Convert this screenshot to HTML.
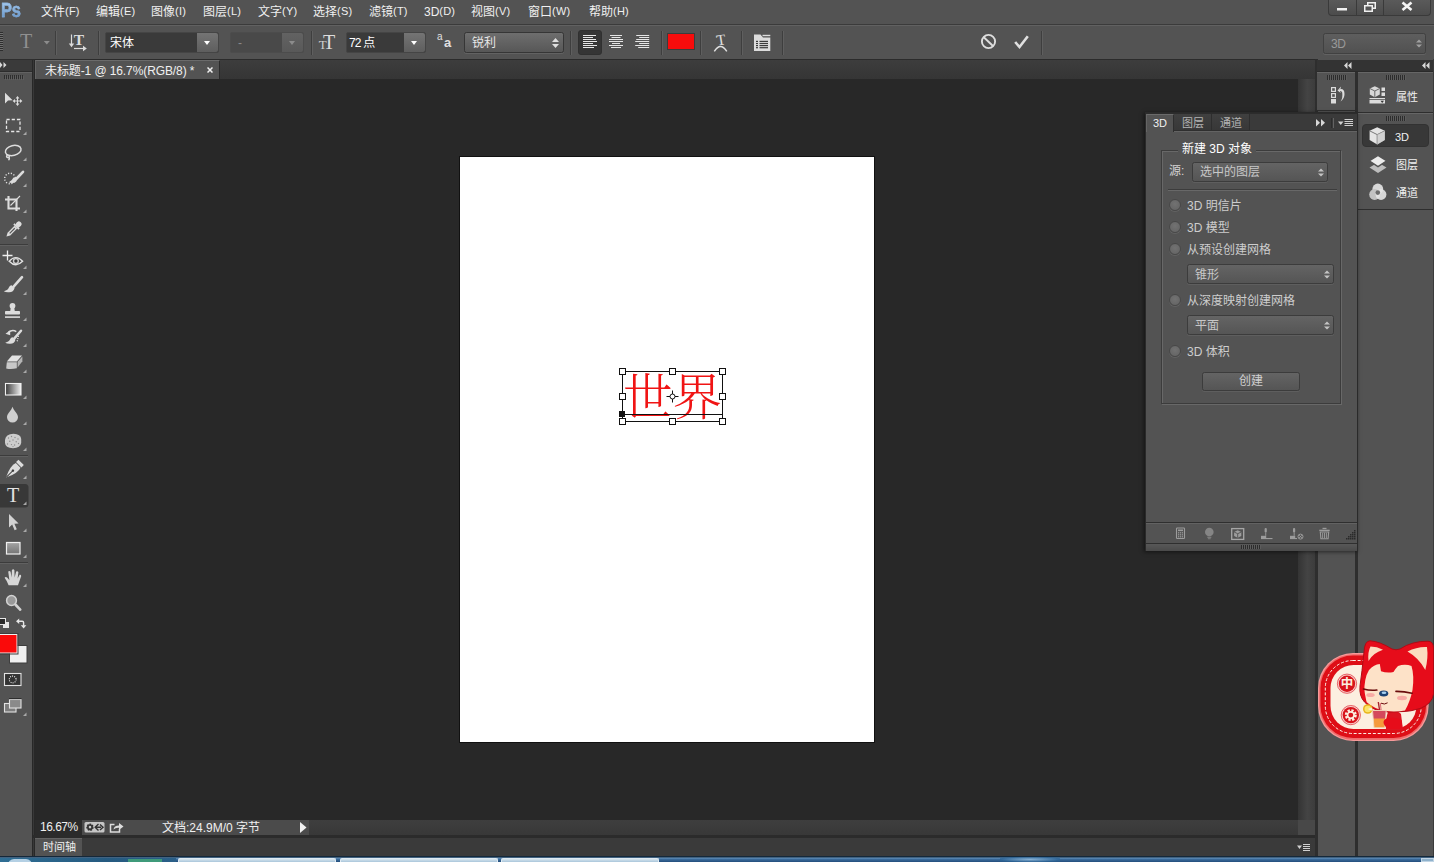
<!DOCTYPE html>
<html lang="zh-CN">
<head>
<meta charset="utf-8">
<title>Photoshop</title>
<style>
*{box-sizing:border-box;margin:0;padding:0}
html,body{width:1434px;height:862px;overflow:hidden;background:#535353}
body{position:relative;font-family:"Liberation Sans","Noto Sans CJK SC",sans-serif;font-size:12px;color:#e6e6e6}
.abs{position:absolute}
#menubar{left:0;top:0;width:1434px;height:25px;background:#535353;border-bottom:1px solid #3b3b3b}
#menubar .mi{position:absolute;top:3px;height:18px;line-height:18px;white-space:nowrap;color:#f0f0f0}
#optbar{left:0;top:25px;width:1434px;height:34px;background:#535353;border-top:1px solid #616161}
#tabbar{left:35px;top:59px;width:1280px;height:20px;background:linear-gradient(#3d3d3d,#353535);border-top:1px solid #2b2b2b}
#canvas{left:32px;top:79px;width:1283px;height:741px;background:#282828}
#doc{left:459px;top:156px;width:416px;height:587px;background:#fff;border:1px solid #111}
#tools{left:0;top:60px;width:32px;height:796px;background:#535353;box-shadow:1px 0 0 #282828,2px 0 0 #383838,3px 0 0 #282828}
#statusbar{left:35px;top:820px;width:1280px;height:15px;background:linear-gradient(#3e3e3e,#383838)}
#timeline{left:35px;top:838px;width:1280px;height:18px;background:#3a3a3a}
#taskbar{left:0;top:856px;width:1434px;height:6px;background:#2a5a8c}
#dock{left:1315px;top:59px;width:119px;height:798px;background:#535353}
#p3d{left:1146px;top:113px;width:211px;height:437px;background:#535353}

.vsep{position:absolute;top:5px;width:2px;height:24px;border-left:1px solid #3e3e3e;border-right:1px solid #5f5f5f}
.combo{position:absolute;top:6px;height:21px;background:#3a3a3a;border:1px solid #454545;border-radius:2px}
.combo.dis{background:#494949;border-color:#4c4c4c}
.combo .ct{position:absolute;top:1px;line-height:18px;color:#fff;white-space:nowrap}
.combo .cb{position:absolute;right:0;top:0;width:21px;height:19px;background:linear-gradient(#747474,#5e5e5e);border-radius:0 2px 2px 0}
.combo.dis .cb{background:linear-gradient(#626262,#595959)}
.combo .cb:after{content:"";position:absolute;left:7px;top:8px;border:3.500px solid transparent;border-top:4px solid #fff;border-bottom:none}
.combo.dis .cb:after{border-top-color:#8c8c8c}
.btn{position:absolute;border:1px solid #363636;border-radius:2.500px;background:linear-gradient(#6e6e6e,#575757);box-shadow:0 1px 0 #626262;color:#e8e8e8;white-space:nowrap}

#taskbar{background:linear-gradient(#14283a 0,#14283a 1.200px,#6f9cc6 1.800px,#3d6e9e 3px,#234e7c 100%)}
#taskbar .tb{top:2px;height:4px;background:linear-gradient(#d8e6f0,#a9c6da);border:1px solid #dfeaf2;border-bottom:none;border-radius:2px 2px 0 0}

.grip{position:absolute;width:20px;height:5px;background:repeating-linear-gradient(90deg,#2c2c2c 0 1px,#5c5c5c 1px 2px)}
.dl{line-height:16px;font-size:11px;color:#f0f0f0;white-space:nowrap}

#p3d .btn{background:linear-gradient(#646464,#555);border-color:#3c3c3c;box-shadow:0 1px 0 #5e5e5e}
#p3d{box-shadow:0 0 0 1px #2a2a2a, -1px 1px 4px 1px rgba(0,0,0,.55)}
.rd{position:absolute;left:23px;width:12px;height:12px;border-radius:50%;background:radial-gradient(circle at 50% 40%,#727272,#626262);border:1px solid #484848;box-shadow:0 1px 0 #636363}
.rl{position:absolute;left:41px;line-height:18px;color:#cdcdcd;white-space:nowrap}
/* scrollbars */
#vscroll{left:1298px;top:79px;width:17px;height:741px;background:linear-gradient(90deg,#343434,#444 55%,#3c3c3c)}
#hscroll{left:344px;top:819px;width:954px;height:17px;background:linear-gradient(#3e3e3e,#363636)}
.ac{font-size:11px;position:relative;top:-1px;letter-spacing:0.2px}
</style>
</head>
<body>
<div id="menubar" class="abs">
<div class="abs" style="left:1px;top:-1px;width:30px;height:22px;font:bold 20px/22px 'Liberation Sans',sans-serif;color:#86b0de;-webkit-text-stroke:0.400px #86b0de;letter-spacing:-0.3px;transform:scaleX(.82);transform-origin:0 0;background:linear-gradient(#a4c8ec 15%,#6a98cc 85%);-webkit-background-clip:text;background-clip:text;-webkit-text-fill-color:transparent">Ps</div>
<span class="mi" style="left:41px">文件<span class="ac">(F)</span></span>
<span class="mi" style="left:96px">编辑<span class="ac">(E)</span></span>
<span class="mi" style="left:151px">图像<span class="ac">(I)</span></span>
<span class="mi" style="left:203px">图层<span class="ac">(L)</span></span>
<span class="mi" style="left:258px">文字<span class="ac">(Y)</span></span>
<span class="mi" style="left:313px">选择<span class="ac">(S)</span></span>
<span class="mi" style="left:369px">滤镜<span class="ac">(T)</span></span>
<span class="mi" style="left:424px">3D<span class="ac">(D)</span></span>
<span class="mi" style="left:471px">视图<span class="ac">(V)</span></span>
<span class="mi" style="left:528px">窗口<span class="ac">(W)</span></span>
<span class="mi" style="left:589px">帮助<span class="ac">(H)</span></span>
<div class="abs" id="winctl" style="left:1328px;top:0;width:103px;height:16px;border:1px solid #3a3a3a;border-top:none;border-radius:0 0 4px 4px;background:linear-gradient(#5a5a5a,#4c4c4c)">
<div class="abs" style="left:27px;top:0;width:1px;height:15px;background:#3a3a3a"></div>
<div class="abs" style="left:54px;top:0;width:1px;height:15px;background:#3a3a3a"></div>
<svg class="abs" style="left:0;top:0" width="101" height="15" viewBox="0 0 101 15">
<rect x="8" y="8" width="10" height="2.5" fill="#f0f0f0"/>
<rect x="38.75" y="2.75" width="7.5" height="5.5" fill="none" stroke="#f0f0f0" stroke-width="1.5"/>
<rect x="35.75" y="5.75" width="7.5" height="5.5" fill="#555" stroke="#f0f0f0" stroke-width="1.5"/>
<path d="M73.5 2.5 L82.5 10 M82.5 2.5 L73.5 10" stroke="#f4f4f4" stroke-width="2.6"/>
</svg></div>
</div>
<div id="optbar" class="abs">
<!-- gripper -->
<div class="abs" style="left:0;top:6px;width:3px;height:19px;background:repeating-linear-gradient(#2e2e2e 0 1px,#707070 1px 2px)"></div>
<!-- T preset -->
<div class="abs" style="left:19px;top:4px;width:14px;height:22px;font:20px/22px 'Liberation Serif',serif;color:#909090;text-align:center">T</div>
<svg class="abs" style="left:42px;top:15px" width="8" height="4"><path d="M1.800 0 L7.800 0 L4.800 3.500Z" fill="#8c8c8c"/></svg>
<div class="vsep" style="left:55px"></div>
<!-- orientation icon -->
<svg class="abs" style="left:68px;top:8px" width="20" height="18" viewBox="68 34 20 18">
<path d="M71.500 34.500 V45" stroke="#dcdcdc" stroke-width="1.200" fill="none"/><path d="M68.800 43.500 H74.200 L71.500 47.200Z" fill="#dcdcdc"/>
<path d="M74 48.500 H84" stroke="#dcdcdc" stroke-width="1.200" fill="none"/><path d="M83 45.800 V51.200 L86.800 48.500Z" fill="#dcdcdc"/>
<text x="79" y="45.300" font-family="Liberation Serif,serif" font-size="15.500" font-weight="bold" fill="#dcdcdc" text-anchor="middle">T</text>
</svg>
<div class="vsep" style="left:98px"></div>
<!-- font combo -->
<div class="combo" style="left:105px;width:114px"><span class="ct" style="left:4px">宋体</span><i class="cb"></i></div>
<div class="combo dis" style="left:230px;width:74px"><span class="ct" style="left:7px;color:#8a8a8a">-</span><i class="cb"></i></div>
<div class="vsep" style="left:311px"></div>
<!-- TT icon -->
<svg class="abs" style="left:316px;top:6px" width="24" height="20" viewBox="316 32 24 20">
<text x="322.800" y="49" font-family="Liberation Serif,serif" font-size="13" fill="#cfcfcf" text-anchor="middle">T</text>
<text x="329.200" y="49" font-family="Liberation Serif,serif" font-size="20" fill="#dcdcdc" text-anchor="middle">T</text>
</svg>
<div class="combo" style="left:346px;width:80px"><span class="ct" style="left:2px;letter-spacing:-0.8px">72 点</span><i class="cb"></i></div>
<!-- aa -->
<div class="abs" style="left:437px;top:7px;width:18px;height:20px;color:#e0e0e0;font-family:'Liberation Sans',sans-serif"><span class="abs" style="left:0;top:-2px;font-size:10px;line-height:12px">a</span><span class="abs" style="left:7px;top:2px;font-size:13px;line-height:16px;font-weight:bold">a</span></div>
<!-- antialias -->
<div class="btn" style="left:464px;top:6px;width:100px;height:21px"><span class="abs" style="left:7px;top:1px;line-height:18px">锐利</span><svg class="abs ud" style="right:4px;top:5px" width="7" height="10"><path d="M0 4 L3.5 0 L7 4Z M0 6 L3.5 10 L7 6Z" fill="#e0e0e0"/></svg></div>
<div class="vsep" style="left:570px"></div>
<!-- align -->
<div class="abs" style="left:578px;top:4px;width:24px;height:25px;background:#353535;border-radius:3px;border:1px solid #303030"></div>
<svg class="abs" style="left:583px;top:9px" width="70" height="15" viewBox="0 0 70 15">
<g stroke="#e6e6e6" stroke-width="1">
<path d="M0 0.5H13 M0 2.5H10 M0 4.5H13 M0 6.5H14 M0 8.5H10 M0 10.5H14 M0 12.5H11 "/>
<path d="M27 0.5H39 M28.5 2.5H37.5 M26 4.5H40 M26 6.5H40 M29 8.5H37 M26 10.5H40 M28 12.5H38 "/>
<path d="M53.2 0.5H66.2 M56.2 2.5H66.2 M53.2 4.5H66.2 M52.2 6.5H66.2 M56.2 8.5H66.2 M52.2 10.5H66.2 M55.2 12.5H66.2 "/>
</g></svg>
<div class="vsep" style="left:661px"></div>
<div class="abs" style="left:667px;top:7px;width:28px;height:17px;background:#f80c0c;border:1px solid #3c3c3c"></div>
<div class="vsep" style="left:700px"></div>
<!-- warp -->
<svg class="abs" style="left:710px;top:6px" width="22" height="22" viewBox="710 32 22 22">
<path d="M714.300 51.300 Q720.500 41.500 726.800 51.300" stroke="#e0e0e0" stroke-width="1.500" fill="none"/>
<g transform="rotate(-9 721 40)"><text x="721" y="44.800" font-family="Liberation Serif,serif" font-size="15" fill="#e0e0e0" text-anchor="middle">T</text></g>
</svg>
<div class="vsep" style="left:741px"></div>
<!-- panel icon -->
<svg class="abs" style="left:754px;top:8px" width="17" height="18" viewBox="0 0 17 18">
<path d="M0 0.600 H6.500 L9 3.600 H16.300 V17 H0Z" fill="#dcdcdc"/><rect x="8.500" y="0.800" width="7.800" height="1.400" fill="#dcdcdc"/>
<g fill="#3a3a3a"><rect x="2" y="6.800" width="2" height="1.200"/><rect x="5.500" y="6.800" width="8.500" height="1.200"/><rect x="2" y="8.900" width="2" height="1.200"/><rect x="5.500" y="8.900" width="8.500" height="1.200"/><rect x="2" y="11" width="2" height="1.200"/><rect x="5.500" y="11" width="8.500" height="1.200"/><rect x="2" y="13.100" width="2" height="1.200"/><rect x="5.500" y="13.100" width="8.500" height="1.200"/></g>
</svg>
<div class="vsep" style="left:782px"></div>
<!-- cancel / commit -->
<svg class="abs" style="left:980px;top:7px" width="17" height="17" viewBox="0 0 17 17"><circle cx="8.5" cy="8.5" r="6.6" fill="none" stroke="#dedede" stroke-width="1.9"/><path d="M3.8 4.2 L13 13" stroke="#dedede" stroke-width="1.9"/></svg>
<svg class="abs" style="left:1013px;top:7px" width="18" height="17" viewBox="0 0 18 17"><path d="M2.200 9 L6.500 14 L14.800 3.200" fill="none" stroke="#e0e0e0" stroke-width="2.600"/></svg>
<div class="vsep" style="left:1041px"></div>
<div class="btn" style="left:1323px;top:7px;width:103px;height:21px;color:#999;background:linear-gradient(#5e5e5e,#515151);border-color:#414141"><span class="abs" style="left:7px;top:1px;line-height:19px;letter-spacing:-0.4px">3D</span><svg class="abs ud" style="right:3px;top:5px" width="6" height="9"><path d="M0 3.500 L3 0.500 L6 3.500Z M0 5.500 L3 8.500 L6 5.500Z" fill="#a0a0a0"/></svg></div>
</div>
<div class="abs" style="left:0;top:59px;width:1434px;height:1px;background:#2e2e2e"></div>
<div id="tabbar" class="abs"><div class="abs" style="left:0;top:0;width:185px;height:19px;background:#535353;border-top:1px solid #6b6b6b;border-left:1px solid #646464;border-right:1px solid #2a2a2a"><span class="abs" style="left:9px;top:1px;line-height:19px;color:#f0f0f0;white-space:nowrap;letter-spacing:-0.1px">未标题-1 @ 16.7%(RGB/8) *</span><svg class="abs" style="left:171px;top:6px" width="6" height="6"><path d="M0.500 0.500 L5.500 5.500 M5.500 0.500 L0.500 5.500" stroke="#f0f0f0" stroke-width="1.500"/></svg></div></div>
<div id="canvas" class="abs"></div>
<div id="doc" class="abs"><div class="abs" id="txt" style="left:163px;top:212px;font-family:'Liberation Serif','Noto Serif CJK SC',serif;font-size:49.5px;line-height:60px;font-weight:300;color:#f01414;white-space:nowrap;letter-spacing:0px">世界</div>
<svg class="abs" style="left:154px;top:206px" width="120" height="66" viewBox="0 0 120 66">
<g fill="none" stroke="#111" stroke-width="1"><rect x="8.5" y="8.5" width="100" height="50"/><path d="M8.500 51.5H108"/></g>
<g fill="#fff" stroke="#111" stroke-width="1"><rect x="5.5" y="5.5" width="6" height="6"/><rect x="55.5" y="5.5" width="6" height="6"/><rect x="105.5" y="5.500" width="6" height="6"/><rect x="5.5" y="30.500" width="6" height="6"/><rect x="105.5" y="30.500" width="6" height="6"/><rect x="5.5" y="55.5" width="6" height="6"/><rect x="55.5" y="55.5" width="6" height="6"/><rect x="105.5" y="55.5" width="6" height="6"/></g>
<rect x="5" y="48" width="6" height="6" fill="#111"/>
<g stroke="#111" stroke-width="1" fill="#fff"><path d="M58.500 27.5V39.5 M52.5 33.500H64.500"/><circle cx="58.5" cy="33.5" r="2.500"/></g>
</svg></div>
<div id="vscroll" class="abs"></div>
<div id="tools" class="abs"></div>

<svg class="abs" style="left:0;top:0" width="33" height="862" viewBox="0 0 33 862">
<defs>
<linearGradient id="gh" x1="0" x2="1" y1="0" y2="0"><stop offset="0" stop-color="#3a3a3a"/><stop offset="1" stop-color="#f0f0f0"/></linearGradient>
<linearGradient id="gv" x1="0" x2="0" y1="0" y2="1"><stop offset="0" stop-color="#a4a4a4"/><stop offset="1" stop-color="#747474"/></linearGradient>
</defs>
<!-- header -->
<rect x="0" y="60" width="32" height="11" fill="#3a3a3a"/>
<rect x="0" y="71" width="32" height="1" fill="#2c2c2c"/>
<rect x="0" y="72" width="32" height="1" fill="#626262"/>
<path d="M0 62 L2.5 65 L0 68Z M3.5 62 L6.5 65 L3.5 68Z" fill="#d8d8d8"/>
<g stroke="#2e2e2e" stroke-width="1"><path d="M4.5 75V79 M6.5 75V79 M8.5 75V79 M10.5 75V79 M12.5 75V79 M14.5 75V79 M16.5 75V79 M18.5 75V79 M20.5 75V79 M22.5 75V79"/></g>
<g stroke="#686868" stroke-width="1"><path d="M5.5 76V80 M7.5 76V80 M9.5 76V80 M11.5 76V80 M13.5 76V80 M15.5 76V80 M17.5 76V80 M19.5 76V80 M21.5 76V80 M23.5 76V80" opacity=".5"/></g>
<!-- separators -->
<g><rect x="0" y="244" width="28" height="1" fill="#3c3c3c"/><rect x="0" y="245" width="28" height="1" fill="#616161"/>
<rect x="0" y="455" width="28" height="1" fill="#3c3c3c"/><rect x="0" y="456" width="28" height="1" fill="#616161"/>
<rect x="0" y="562" width="28" height="1" fill="#3c3c3c"/><rect x="0" y="563" width="28" height="1" fill="#616161"/></g>
<!-- selected T bg -->
<path d="M0 484 H25 Q28.5 484 28.5 487.5 V504 Q28.5 507.5 25 507.5 H0Z" fill="#383838"/>
<g fill="#a8a8a8"><path d="M26.5 131.5 V135 H23Z"/><path d="M26.5 157.5 V161 H23Z"/><path d="M26.5 183.5 V187 H23Z"/><path d="M26.5 209.5 V213 H23Z"/><path d="M26.5 235.5 V239 H23Z"/><path d="M26.5 265.5 V269 H23Z"/><path d="M26.5 291.5 V295 H23Z"/><path d="M26.5 317.5 V321 H23Z"/><path d="M26.5 343.5 V347 H23Z"/><path d="M26.5 369.5 V373 H23Z"/><path d="M26.5 395.5 V399 H23Z"/><path d="M26.5 421.5 V425 H23Z"/><path d="M26.5 447.5 V451 H23Z"/><path d="M26.5 475.5 V479 H23Z"/><path d="M26.5 501.5 V505 H23Z"/><path d="M26.5 528.5 V532 H23Z"/><path d="M26.5 554.5 V558 H23Z"/><path d="M26.5 583.5 V587 H23Z"/><path d="M26.5 712.5 V716 H23Z"/></g>
<!-- move -->
<path d="M5 92.800 V103.600 L8 100.600 L12.600 100.300Z" fill="#dcdcdc"/>
<g stroke="#dcdcdc" stroke-width="1.100" fill="none"><path d="M14 101H21 M17.500 97.500V104.500"/></g>
<path d="M17.500 96 L19.400 98.400 H15.600Z M17.500 106 L19.400 103.600 H15.600Z M12.600 101 L15 99.100 V102.900Z M22.400 101 L20 99.100 V102.900Z" fill="#dcdcdc"/>
<!-- marquee -->
<rect x="6.5" y="119.5" width="13.5" height="12" fill="none" stroke="#e6e6e6" stroke-width="1.3" stroke-dasharray="3.2 2"/>
<!-- lasso -->
<g fill="none" stroke="#dcdcdc" stroke-width="1.5"><ellipse cx="13.2" cy="150.5" rx="8" ry="5" transform="rotate(-14 13.2 150.5)"/><path d="M7.8 154.5 Q5.5 156.5 7.6 157.6 Q10 157.6 9 155.6 M8.8 157 Q10 159 8.5 160.2"/></g>
<!-- quick select -->
<circle cx="10" cy="178.5" r="5.3" fill="none" stroke="#e8e8e8" stroke-width="1.4" stroke-dasharray="1.1 1.7"/>
<path d="M23 171.8 L16.2 179" stroke="#dcdcdc" stroke-width="2.6" stroke-linecap="round"/>
<path d="M16.8 178.2 Q17.5 182.5 13 183 Q10 183.2 8.8 182.2 Q12 181 13.5 177.6Z" fill="#dcdcdc"/>
<!-- crop -->
<g stroke="#dcdcdc" fill="none"><path d="M8.5 196V208.5H20 M5 199.5H16.5V211" stroke-width="2.1"/><path d="M20 196L10.5 205.5" stroke-width="1.1"/></g>
<!-- eyedropper -->
<g transform="translate(13.5 229.5) rotate(45)"><rect x="-2.6" y="-10.2" width="5.2" height="5.6" rx="2.2" fill="#dcdcdc"/><rect x="-3.6" y="-5.2" width="7.2" height="1.9" fill="#dcdcdc"/><path d="M-1.9 -3.3 H1.9 V6.5 L0 10 L-1.9 6.5Z" fill="#dcdcdc"/><rect x="-0.6" y="-1.8" width="1.2" height="7.2" fill="#555"/></g>
<!-- red eye -->
<g stroke="#eeeeee" stroke-width="1.3"><path d="M7.5 250.5V260.5 M2.5 255.5H12.5"/></g>
<path d="M9.200 261.300 Q15.800 254 22.600 261.300 Q15.800 268.200 9.200 261.300Z" fill="#484848" stroke="#e2e2e2" stroke-width="1.400"/>
<circle cx="15.900" cy="261" r="3.100" fill="#cfcfcf"/><circle cx="15.900" cy="261" r="1.700" fill="#3c3c3c"/>
<!-- brush -->
<path d="M22 277.2 L13.6 286.6" stroke="#dcdcdc" stroke-width="2.6" stroke-linecap="round"/>
<path d="M11.6 285.2 L14.6 288 Q13.5 292.5 8.5 292.2 Q5.5 292.3 3.8 291.3 Q8.2 290 9 287.2 Q9.8 285.2 11.6 285.2Z" fill="#dcdcdc"/>
<!-- stamp -->
<circle cx="12.5" cy="305.8" r="2.9" fill="#dcdcdc"/><path d="M10.8 307.5 H14.2 L14.8 311.2 H10.2Z" fill="#dcdcdc"/>
<rect x="5" y="311" width="15" height="3.6" rx="0.8" fill="#dcdcdc"/><rect x="5" y="316.3" width="15" height="1.6" fill="#dcdcdc"/>
<!-- history brush -->
<path d="M21 330.8 L14.2 338.6" stroke="#dcdcdc" stroke-width="2.5" stroke-linecap="round"/>
<path d="M12.6 337.2 L15.4 339.8 Q14.6 343.8 10 343.7 Q7 343.8 5.2 342.8 Q9.3 341.6 10.2 339 Q10.9 337.2 12.6 337.2Z" fill="#dcdcdc"/>
<path d="M8.5 332.2 Q12.5 329.2 16.3 331.6" stroke="#dcdcdc" stroke-width="1.5" fill="none"/><path d="M5.5 333.8 L10.2 330.2 L10.2 335.2Z" fill="#dcdcdc"/>
<path d="M18.5 336 L17 342" stroke="#e8e8e8" stroke-width="1.2" stroke-dasharray="1 1.2"/>
<!-- eraser -->
<path d="M12 355.5 H22 L16.8 361.5 H6.8Z" fill="#e2e2e2"/><path d="M6.8 362.3 H16.8 V368.2 Q11 369.6 6.2 368.4Z" fill="#c8c8c8"/><path d="M17.6 361.8 L22.4 356.4 V361.2 L17.6 367.6Z" fill="#b4b4b4"/>
<!-- gradient -->
<rect x="5.5" y="383.5" width="15.5" height="11.5" fill="url(#gh)" stroke="#f0f0f0" stroke-width="1.1"/>
<!-- blur -->
<path d="M12.5 406.8 C13.5 410.5 18 413.5 18 417.2 A5.5 5.2 0 0 1 7 417.2 C7 413.5 11.5 410.5 12.5 406.8Z" fill="#cfcfcf"/>
<!-- sponge -->
<path d="M5 440 Q5.5 434.2 13.5 433.8 Q20.8 434 21.2 439 V443 Q20.5 447.8 13 448.2 Q5.3 447.8 5 443Z" fill="#cdcdcd"/>
<g fill="#8a8a8a"><circle cx="8.5" cy="438" r=".7"/><circle cx="11.5" cy="436.5" r=".7"/><circle cx="15" cy="437.5" r=".7"/><circle cx="18" cy="439" r=".7"/><circle cx="9.8" cy="441.2" r=".7"/><circle cx="13" cy="440" r=".7"/><circle cx="16.2" cy="441.8" r=".7"/><circle cx="7.5" cy="444" r=".7"/><circle cx="11.5" cy="444.6" r=".7"/><circle cx="14.6" cy="445" r=".7"/><circle cx="18.5" cy="443.5" r=".7"/><circle cx="13" cy="446.6" r=".6"/></g>
<!-- pen -->
<g transform="translate(13.5 470) rotate(45)"><rect x="-3.8" y="-10.8" width="7.6" height="3.4" fill="#dcdcdc"/><path d="M-3.3 -6.6 H3.3 Q5.6 -1 0 10.6 Q-5.6 -1 -3.3 -6.6Z" fill="#dcdcdc"/><path d="M0 10 V1.4" stroke="#3c3c3c" stroke-width="1"/><circle cx="0" cy="0.8" r="1.25" fill="#3c3c3c"/></g>
<!-- T -->
<text x="13" y="502" font-family="Liberation Serif,serif" font-size="20" fill="#e2e2e2" text-anchor="middle">T</text>
<!-- path select -->
<path d="M9 514 V527.6 L12.2 524.6 L14.6 530.2 L16.8 529.2 L14.4 523.8 L18.6 523.6Z" fill="#d2d2d2"/>
<!-- rectangle -->
<rect x="6.5" y="542.5" width="13.5" height="11.5" fill="url(#gv)" stroke="#f0f0f0" stroke-width="1.2"/>
<!-- hand -->
<path d="M8.6 585.2 Q7 581 4.6 577.8 Q5.6 576.2 7.4 577.8 L9.4 580.2 L8.2 571.6 Q9.6 570.2 10.6 571.8 L11.6 577.4 L11.9 570 Q13.4 568.6 14.4 570.2 L14.6 577.4 L16.2 571.4 Q17.8 570.6 18.4 572.2 L17.6 578.6 L19.6 574.8 Q21.2 574.4 21.2 576.2 Q19.4 581 18 585.2Z" fill="#d6d6d6"/>
<!-- zoom -->
<circle cx="11.5" cy="600.5" r="4.9" fill="#9a9a9a" stroke="#d2d2d2" stroke-width="1.5"/><path d="M15.6 604.8 L20.2 609.6" stroke="#d2d2d2" stroke-width="2.7" stroke-linecap="round"/>
<!-- default colors -->
<rect x="3.5" y="622.5" width="5" height="5" fill="#e6e6e6" stroke="#e6e6e6"/><rect x="-0.5" y="618.5" width="6" height="6" fill="#2a2a2a" stroke="#e6e6e6"/>
<!-- swap -->
<g fill="none" stroke="#e6e6e6" stroke-width="1.4"><path d="M18 621.2 H22.2 Q23.6 621.2 23.6 622.6 V626"/></g>
<path d="M16 621.2 L19.2 618.4 V624Z M23.6 628.6 L20.8 625.2 H26.4Z" fill="#e6e6e6"/>
<!-- fg/bg -->
<rect x="9.5" y="645.5" width="17.5" height="17.5" fill="#f0f0f0" stroke="#3e3e3e"/>
<rect x="-0.5" y="634.5" width="17.5" height="18.5" fill="#fa0a0a" stroke="#f0f0f0"/><rect x="-1" y="633.5" width="19" height="20.5" fill="none" stroke="#3e3e3e"/>
<!-- quick mask -->
<rect x="4.5" y="673.5" width="16.500" height="12" fill="#333" stroke="#e2e2e2" stroke-width="1.1"/><circle cx="12.7" cy="679.5" r="3.4" fill="none" stroke="#f0f0f0" stroke-width="1.1" stroke-dasharray="1 1.14"/>
<!-- screen mode -->
<rect x="4.500" y="703.5" width="11.5" height="8.5" fill="#7c7c7c" stroke="#e2e2e2" stroke-width="1.1"/>
<rect x="9.5" y="699.5" width="11.5" height="8.500" fill="#8a8a8a" stroke="#e2e2e2" stroke-width="1.1"/><rect x="9" y="698" width="12.500" height="1.2" fill="#2e2e2e"/>
</svg>

<div id="statusbar" class="abs"><div class="abs" style="left:0;top:0;width:47px;height:15px;background:#2b2b2b"></div>
<div class="abs" style="left:47px;top:0;width:227px;height:15px;background:#4b4b4b"></div>
<span class="abs" style="left:5px;top:0;line-height:15px;color:#f0f0f0;letter-spacing:-0.5px">16.67%</span>
<svg class="abs" style="left:49px;top:1px" width="42" height="13" viewBox="0 0 42 13">
<rect x="0.5" y="1" width="20" height="10.500" rx="1.5" fill="#c6c6c6"/>
<circle cx="6" cy="6.200" r="2.600" fill="none" stroke="#333" stroke-width="2.2" stroke-dasharray="1.4 0.9"/><circle cx="6" cy="6.200" r="2.200" fill="none" stroke="#333" stroke-width="1.6"/>
<path d="M11.5 6.200 H17 M14.500 3 L11.2 6.200 L14.500 9.4 M16 3.500 L19 6.200 L16 9" stroke="#333" stroke-width="1.400" fill="none"/>
<path d="M30.5 3.500 H26.5 V11 H35.500 V8" fill="none" stroke="#dcdcdc" stroke-width="1.500"/>
<path d="M29.500 8.500 Q30 4.500 35 4.500 V2 L39.500 5.500 L35 9 V6.800 Q31.500 6.500 29.500 8.500Z" fill="#dcdcdc"/>
</svg>
<span class="abs" style="left:127px;top:1px;line-height:15px;color:#f0f0f0;white-space:nowrap">文档:24.9M/0 字节</span>
<svg class="abs" style="left:264px;top:2px" width="8" height="11"><path d="M1 0 V11 L7.500 5.500Z" fill="#f0f0f0"/></svg></div>
<div class="abs" style="left:1298px;top:820px;width:17px;height:15px;background:#484848"></div>
<div class="abs" style="left:33px;top:835px;width:1282px;height:3px;background:#2b2b2b"></div>
<div class="abs" style="left:1333px;top:835px;width:0;height:0"></div>
<div id="timeline" class="abs"><div class="abs" style="left:0;top:0;width:47px;height:18px;background:#535353;border-top:1px solid #646464"><span class="abs" style="left:8px;top:0;line-height:17px;font-size:11px;color:#f0f0f0;white-space:nowrap">时间轴</span></div>
<svg class="abs" style="left:1262px;top:6px" width="14" height="8"><path d="M0 1.500 H5 L2.500 5Z" fill="#d0d0d0"/><path d="M6 0.500H13 M6 2.500H13 M6 4.500H13 M6 6.500H13" stroke="#d0d0d0"/></svg></div>
<div id="dock" class="abs">
<!-- dock is at left:1315 top:59 -->
<div class="abs" style="left:0;top:0;width:3px;height:798px;background:#2e2e2e"></div>
<div class="abs" style="left:2px;top:1px;width:116px;height:11px;background:#333"></div>
<div class="abs" style="left:2px;top:12px;width:116px;height:1px;background:#2a2a2a"></div>
<svg class="abs" style="left:29px;top:3px" width="8" height="7"><path d="M3.500 0 V7 L0 3.500Z M7.500 0 V7 L4 3.500Z" fill="#d8d8d8"/></svg>
<svg class="abs" style="left:107px;top:3px" width="8" height="7"><path d="M3.500 0 V7 L0 3.500Z M7.500 0 V7 L4 3.500Z" fill="#d8d8d8"/></svg>
<div class="abs" style="left:118px;top:0;width:1px;height:798px;background:#3a3a3a"></div>
<!-- col1 -->
<div class="abs" style="left:2px;top:13px;width:38px;height:39px;border-top:1px solid #666;border-bottom:1px solid #2e2e2e;background:#535353"></div>
<div class="abs" style="left:40px;top:13px;width:3px;height:785px;background:#2e2e2e"></div>
<div class="grip" style="left:12px;top:16px"></div>
<svg class="abs" style="left:16px;top:27px" width="16" height="18" viewBox="0 0 16 18">
<g fill="none" stroke="#dcdcdc" stroke-width="1.200"><rect x="0.600" y="1.600" width="3.800" height="3.800"/><rect x="0.600" y="7.600" width="3.800" height="3.800"/></g><rect x="0" y="13" width="5" height="4.500" fill="#dcdcdc"/>
<path d="M7.500 3.500 Q13.500 1.500 13.500 8 Q13.500 13 9.500 15.500 Q12 12 11.200 6.500 Q10.500 4.500 9 5 L9.800 7 L6.500 4.500 L10 0.500 L9.600 2.800Z" fill="#dcdcdc"/>
</svg>
<!-- col2 group1 -->
<div class="abs" style="left:43px;top:13px;width:75px;height:41px;border-top:1px solid #666;border-bottom:1px solid #2e2e2e"></div>
<div class="grip" style="left:71px;top:16px"></div>
<svg class="abs" style="left:54px;top:27px" width="17" height="18" viewBox="0 0 17 18">
<path d="M5.800 0.200 L10.800 2.500 V8.600 L5.800 11.200 L0.800 8.600 V2.500Z" fill="#d8d8d8"/><path d="M0.800 2.500 L5.800 5 L10.800 2.500 M5.800 5 V11.200" fill="none" stroke="#6a6a6a" stroke-width="1"/>
<rect x="12.500" y="1.500" width="3.500" height="3.500" fill="#dcdcdc"/><rect x="12.500" y="6.500" width="3.500" height="3.500" fill="#dcdcdc"/>
<rect x="0.500" y="12" width="15.500" height="1.200" fill="#dcdcdc"/><rect x="0.500" y="14" width="15.500" height="3.500" fill="#dcdcdc"/><path d="M11.500 14.800 H15 L13.200 17Z" fill="#333"/>
</svg>
<span class="abs dl" style="left:81px;top:30px">属性</span>
<!-- col2 group2 -->
<div class="abs" style="left:43px;top:54px;width:75px;height:97px;border-top:1px solid #666;border-bottom:1px solid #2e2e2e"></div>
<div class="grip" style="left:71px;top:57px"></div>
<div class="abs" style="left:47px;top:65px;width:67px;height:23px;background:#383838;border-radius:4px;border:1px solid #323232"></div>
<svg class="abs" style="left:54px;top:68px" width="17" height="18" viewBox="0 0 17 18"><path d="M8.200 0.300 L15.800 3.800 V13 L8.200 17.500 L0.600 13 V3.800Z" fill="#e4e4e4"/><path d="M0.600 3.800 L8.200 7.600 L15.800 3.800" fill="none" stroke="#777" stroke-width="1"/><path d="M8.200 7.600 V17.500" stroke="#777" stroke-width="1"/><path d="M8.200 7.600 L15.800 3.800 V13 L8.200 17.500Z" fill="#c4c4c4" opacity=".6"/></svg>
<span class="abs dl" style="left:80px;top:70px">3D</span>
<svg class="abs" style="left:54px;top:96px" width="18" height="19" viewBox="0 0 18 19"><path d="M9 7.500 L17.500 12.500 L9 18 L0.500 12.500Z" fill="#bdbdbd"/><path d="M9 0.500 L17.800 5.800 L9 11.600 L0.200 5.800Z" fill="#ececec" stroke="#535353" stroke-width="1.400"/></svg>
<span class="abs dl" style="left:81px;top:98px">图层</span>
<svg class="abs" style="left:54px;top:124px" width="18" height="18" viewBox="0 0 18 18"><circle cx="8.800" cy="6" r="5.400" fill="#d8d8d8"/><circle cx="5.600" cy="11.500" r="5.400" fill="#c2c2c2"/><circle cx="12" cy="11.500" r="5.400" fill="#e6e6e6" opacity=".9"/><circle cx="8.800" cy="9.600" r="2.300" fill="#6c6c6c"/></svg>
<span class="abs dl" style="left:81px;top:126px">通道</span>
</div>
<div id="p3d" class="abs">
<!-- panel origin 1146,113 -->
<div class="abs" style="left:0;top:0;width:211px;height:18px;background:#3a3a3a;border-top:1px solid #2c2c2c;border-bottom:1px solid #2f2f2f"></div>
<div class="abs" style="left:0;top:18px;width:211px;height:1px;background:#636363"></div>
<div class="abs" style="left:0;top:1px;width:28px;height:18px;background:#535353;border-left:1px solid #656565;border-top:1px solid #6a6a6a;border-right:1px solid #2e2e2e"><span class="abs" style="left:6px;top:0;line-height:17px;font-size:11px;color:#f0f0f0">3D</span></div>
<div class="abs" style="left:28px;top:1px;width:38px;height:16px;border-right:1px solid #2e2e2e;background:linear-gradient(#404040,#383838)"><span class="abs" style="left:8px;top:1px;line-height:16px;font-size:11px;color:#b4b4b4;white-space:nowrap">图层</span></div>
<div class="abs" style="left:66px;top:1px;width:38px;height:16px;border-right:1px solid #2e2e2e;background:linear-gradient(#404040,#383838)"><span class="abs" style="left:8px;top:1px;line-height:16px;font-size:11px;color:#b4b4b4;white-space:nowrap">通道</span></div>
<svg class="abs" style="left:169px;top:5px" width="40" height="10" viewBox="0 0 40 10">
<path d="M1 1 V8.500 L5 4.750Z M6 1 V8.500 L10 4.750Z" fill="#d8d8d8"/>
<path d="M16.500 0V10" stroke="#2c2c2c"/><path d="M18.500 0V10" stroke="#636363"/>
<path d="M23 3.500 H28.500 L25.750 7Z" fill="#d0d0d0"/><path d="M29.500 1.500H38 M29.500 3.500H38 M29.500 5.500H38 M29.500 7.500H38" stroke="#d0d0d0"/>
</svg>
<!-- fieldset -->
<div class="abs" style="left:15px;top:37px;width:180px;height:254px;border:1px solid #3c3c3c;box-shadow:1px 1px 0 #686868, inset 1px 1px 0 #686868"></div>
<span class="abs" style="left:32px;top:28px;padding:0 4px;background:#535353;line-height:17px;color:#fff;white-space:nowrap;letter-spacing:0px">新建 3D 对象</span>
<span class="abs" style="left:23px;top:50px;line-height:17px;color:#d2d2d2;white-space:nowrap">源:</span>
<div class="btn" style="left:46px;top:49px;width:136px;height:20px;color:#c8c8c8"><span class="abs" style="left:7px;top:1px;line-height:17px">选中的图层</span><svg class="abs" style="right:3px;top:5px" width="6" height="9"><path d="M0 3.500 L3 0.500 L6 3.500Z M0 5.500 L3 8.500 L6 5.500Z" fill="#c4c4c4"/></svg></div>
<div class="abs" style="left:22px;top:76px;width:169px;height:2px;border-top:1px solid #3c3c3c;border-bottom:1px solid #686868"></div>
<i class="rd" style="top:86px"></i><span class="rl" style="top:84px">3D 明信片</span>
<i class="rd" style="top:108px"></i><span class="rl" style="top:106px">3D 模型</span>
<i class="rd" style="top:130px"></i><span class="rl" style="top:128px">从预设创建网格</span>
<div class="btn" style="left:41px;top:151px;width:147px;height:20px;color:#c8c8c8"><span class="abs" style="left:7px;top:2px;line-height:17px">锥形</span><svg class="abs" style="right:3px;top:5px" width="6" height="9"><path d="M0 3.500 L3 0.500 L6 3.500Z M0 5.500 L3 8.500 L6 5.500Z" fill="#c4c4c4"/></svg></div>
<i class="rd" style="top:181px"></i><span class="rl" style="top:179px">从深度映射创建网格</span>
<div class="btn" style="left:41px;top:202px;width:147px;height:20px;color:#c8c8c8"><span class="abs" style="left:7px;top:2px;line-height:17px">平面</span><svg class="abs" style="right:3px;top:5px" width="6" height="9"><path d="M0 3.500 L3 0.500 L6 3.500Z M0 5.500 L3 8.500 L6 5.500Z" fill="#c4c4c4"/></svg></div>
<i class="rd" style="top:232px"></i><span class="rl" style="top:230px">3D 体积</span>
<div class="btn" style="left:56px;top:259px;width:98px;height:19px;color:#d0d0d0;text-align:center;line-height:17px">创建</div>
<!-- bottom bar -->
<div class="abs" style="left:0;top:409px;width:211px;height:2px;border-top:1px solid #2f2f2f;border-bottom:1px solid #626262"></div>
<div class="abs" style="left:0;top:430px;width:211px;height:1px;background:#2f2f2f"></div>
<div class="abs" style="left:0;top:431px;width:211px;height:7px;background:linear-gradient(#585858,#4a4a4a)"></div>
<div class="grip" style="left:95px;top:432px;height:4px"></div>
<svg class="abs" style="left:26px;top:412px" width="185" height="18" viewBox="0 0 185 18">
<g fill="#9c9c9c">
<!-- calc -->
<rect x="4.500" y="3" width="8" height="10.500" rx="0.800" fill="none" stroke="#9c9c9c" stroke-width="1.100"/><rect x="6" y="4.500" width="5" height="1.600"/><rect x="6" y="7.200" width="1.200" height="1.200"/><rect x="7.900" y="7.200" width="1.200" height="1.200"/><rect x="9.800" y="7.200" width="1.200" height="1.200"/><rect x="6" y="9.200" width="1.200" height="1.200"/><rect x="7.900" y="9.200" width="1.200" height="1.200"/><rect x="9.800" y="9.200" width="1.200" height="1.200"/><rect x="6" y="11.200" width="1.200" height="1.200"/><rect x="7.900" y="11.200" width="1.200" height="1.200"/><rect x="9.800" y="11.200" width="1.200" height="1.200"/>
<!-- bulb -->
<circle cx="37.300" cy="7" r="4.300" fill="#858585"/><rect x="35.300" y="11.700" width="4" height="1.100" fill="#858585"/><rect x="35.900" y="13.300" width="2.800" height="0.900" fill="#858585"/>
<!-- cube in frame -->
<rect x="59.700" y="3.600" width="12" height="10.800" fill="none" stroke="#a6a6a6" stroke-width="1.300"/><path d="M65.700 5.300 L69.300 7 V11 L65.700 12.800 L62.100 11 V7Z"/><path d="M62.100 7 L65.700 8.700 L69.300 7 M65.700 8.700V12.800" stroke="#535353" stroke-width=".9" fill="none"/>
<!-- ground-plane icons -->
<rect x="92.600" y="3" width="2.200" height="4.600" rx="1"/><rect x="93.300" y="7.400" width="0.900" height="3.400"/><rect x="89" y="10.800" width="5.200" height="3.200"/><rect x="89" y="13" width="11.500" height="1.100"/>
<rect x="121" y="3" width="2.200" height="4.600" rx="1"/><rect x="121.700" y="7.400" width="0.900" height="3.400"/><rect x="118" y="10.800" width="5.200" height="3.200"/><rect x="118" y="13" width="7" height="1.100"/><circle cx="128.500" cy="11.600" r="2.500" fill="none" stroke="#9c9c9c" stroke-width="1"/><path d="M127.100 10.200L129.900 13M129.900 10.200L127.100 13" stroke="#9c9c9c" stroke-width=".9"/>
<!-- trash -->
<rect x="147.300" y="4.700" width="10.400" height="1.400"/><rect x="150.500" y="2.800" width="4" height="1.300"/><path d="M148.300 7 H156.700 L156.100 13.800 H148.900Z" fill="none" stroke="#9c9c9c" stroke-width="1.100"/><path d="M150.600 7.800V13.200 M152.500 7.800V13.200 M154.400 7.800V13.200" stroke="#9c9c9c" stroke-width=".9"/>
</g>
<g fill="#2a2a2a"><rect x="182" y="5" width="1.500" height="1.500"/><rect x="180" y="7" width="1.500" height="1.500"/><rect x="182" y="7" width="1.500" height="1.500"/><rect x="178" y="9" width="1.500" height="1.500"/><rect x="180" y="9" width="1.500" height="1.500"/><rect x="182" y="9" width="1.500" height="1.500"/><rect x="176" y="11" width="1.500" height="1.500"/><rect x="178" y="11" width="1.500" height="1.500"/><rect x="180" y="11" width="1.500" height="1.500"/><rect x="182" y="11" width="1.500" height="1.500"/><rect x="174" y="13" width="1.500" height="1.500"/><rect x="176" y="13" width="1.500" height="1.500"/><rect x="178" y="13" width="1.500" height="1.500"/><rect x="180" y="13" width="1.500" height="1.500"/><rect x="182" y="13" width="1.500" height="1.500"/></g>
</svg>
</div>

<svg class="abs" id="sticker" style="left:1310px;top:630px" width="124" height="120" viewBox="1310 630 124 120">
<!-- badge -->
<rect x="1318" y="653" width="110.600" height="88" rx="35" fill="#f79a9a"/>
<rect x="1319.200" y="654.200" width="108.200" height="85.600" rx="34" fill="#f06a6a"/>
<rect x="1320.500" y="655.500" width="105.600" height="82.500" rx="32.500" fill="#de0e16"/>
<rect x="1325.300" y="660.500" width="96" height="73" rx="27.500" fill="none" stroke="#fdeee6" stroke-width="1" stroke-dasharray="3 1.800"/>
<rect x="1330.500" y="665" width="86" height="64" rx="23" fill="#fcefe0"/>
<!-- 中 icon -->
<circle cx="1347" cy="683.700" r="10.200" fill="#fbd5d0"/>
<circle cx="1347" cy="683.700" r="9.600" fill="none" stroke="#e0444a" stroke-width=".8"/>
<circle cx="1347" cy="683.700" r="8.200" fill="#d8141c"/>
<text x="1347" y="688.300" font-family="Liberation Sans,Noto Sans CJK SC,sans-serif" font-size="12.500" font-weight="bold" fill="#fcefe0" text-anchor="middle">中</text>
<!-- gear icon -->
<circle cx="1350.800" cy="715.100" r="10.200" fill="#fbd5d0"/>
<circle cx="1350.800" cy="715.100" r="9.600" fill="none" stroke="#e0444a" stroke-width=".8"/>
<circle cx="1350.800" cy="715.100" r="8.200" fill="#d8141c"/>
<circle cx="1350.800" cy="715.100" r="4.700" fill="none" stroke="#fcefe0" stroke-width="2.600" stroke-dasharray="2.200 1.490"/>
<circle cx="1350.800" cy="715.100" r="3.300" fill="none" stroke="#fcefe0" stroke-width="1.700"/>
<!-- body -->
<path d="M1388 712 Q1397 709 1401 714 L1403 730 H1386 Q1385 720 1388 712Z" fill="#dc1420"/>
<!-- head -->
<path id="hd" d="M1364 652 Q1364.500 641 1370 640.800 Q1380 641.500 1392 649 Q1396 650.500 1400 649 Q1412 641 1428 641.200 Q1433.500 641.500 1433.500 648 L1433.500 694 Q1432 704 1420 708.500 Q1410 711.500 1404 711.500 L1388 712 Q1372 711 1364.500 702 Q1359 696 1360 686 Q1362 672 1364 652Z" fill="#e60c1a" stroke="#b00a14" stroke-width="1"/>
<!-- inner ears -->
<path d="M1370.500 646.500 Q1377 646.500 1383 649.800 Q1373 653 1368.500 661 Q1367.500 652 1370.500 646.500Z" fill="#fbdcc0"/>
<path d="M1407.500 651.500 Q1417 646.500 1427 647 Q1428.500 658 1425.300 670 Q1419 658 1407.500 651.500Z" fill="#fbdcc0"/>
<!-- face -->
<path d="M1364.200 694 Q1364 678 1369 670 Q1374 664.500 1379.800 664 Q1380.500 668 1381 671.200 Q1387 673.500 1393.500 672 Q1395.500 668.500 1398 666 Q1405 663.500 1411.500 666 Q1414.500 676 1412.500 690 Q1410 702 1405 710.500 Q1396 712 1386 711 Q1374 709 1366.500 702 Q1364.400 698 1364.200 694Z" fill="#fde2c8"/>
<!-- left hair lock -->
<path d="M1360.300 690 Q1361 684 1363.500 680 Q1364 692 1366.500 702 Q1361 698 1360.300 690Z" fill="#e60c1a"/>
<!-- eyes -->
<path d="M1363.500 689 Q1370 690.800 1376.800 690" fill="none" stroke="#6a0c0c" stroke-width="1.700" stroke-linecap="round"/>
<path d="M1396 691.300 Q1404 691.200 1412 693.200" fill="none" stroke="#6a0c0c" stroke-width="1.700" stroke-linecap="round"/>
<!-- blush -->
<ellipse cx="1370.500" cy="695" rx="4.200" ry="2" fill="#f9aaa4"/>
<ellipse cx="1402" cy="698" rx="5" ry="2.200" fill="#f9aaa4"/>
<!-- nose -->
<ellipse cx="1383.700" cy="693.500" rx="4.600" ry="3" fill="#1c4274"/><ellipse cx="1384" cy="692.800" rx="2.400" ry="1.200" fill="#a8d0f0"/>
<path d="M1381 703.200 Q1384.500 705 1387.600 702.800" fill="none" stroke="#6a0c0c" stroke-width="1"/>
<!-- drink -->
<path d="M1378.300 702 L1380.200 714" stroke="#a82430" stroke-width="1.400"/>
<path d="M1380.300 703 L1381.600 714" stroke="#d86a74" stroke-width="1"/>
<path d="M1372.500 710.500 H1386.200 L1384.800 727.800 H1374Z" fill="#f59a3c"/>
<path d="M1372.500 710.500 H1386.200 L1385.600 718.500 H1373.100Z" fill="#d4485c"/>
<path d="M1372.500 710.500 H1386.200 L1384.800 727.800 H1374Z" fill="none" stroke="#f0d8c0" stroke-width=".9"/>
<circle cx="1367.800" cy="709" r="4.800" fill="#e8b41c"/><circle cx="1367.800" cy="709" r="3.300" fill="#fbe46a"/><path d="M1367.800 709 L1372 707.500 L1372 710.800Z" fill="#fcefe0"/>
<!-- paw -->
<path d="M1383.500 722 Q1384 718.500 1389 718 Q1396 717 1401.500 720 L1402.500 729 H1390 Q1383.500 727 1383.500 722Z" fill="#e60c1a"/>
</svg>
<div id="taskbar" class="abs"><div class="abs" style="left:0;top:2px;width:176px;height:4px;background:linear-gradient(90deg,#2f6e94,#255a80 60%,#2a5f88)"></div><div class="abs" style="left:8px;top:3px;width:24px;height:6px;border-radius:12px 12px 0 0;background:#b4d0e4"></div>
<div class="abs" style="left:128px;top:3px;width:34px;height:3px;background:#3f9a7a"></div>
<div class="abs tb" style="left:178px;width:158px"></div><div class="abs tb" style="left:340px;width:158px"></div><div class="abs tb" style="left:501px;width:158px"></div>
<div class="abs" style="left:1000px;top:1px;width:60px;height:5px;background:radial-gradient(ellipse at center,#9cc4e4 0,#2c6496 70%,transparent 100%);opacity:.8"></div>
<div class="abs" style="left:1421px;top:2px;width:13px;height:4px;background:#8fb2cc;border:1px solid #c0d4e4"></div></div>
</body>
</html>
